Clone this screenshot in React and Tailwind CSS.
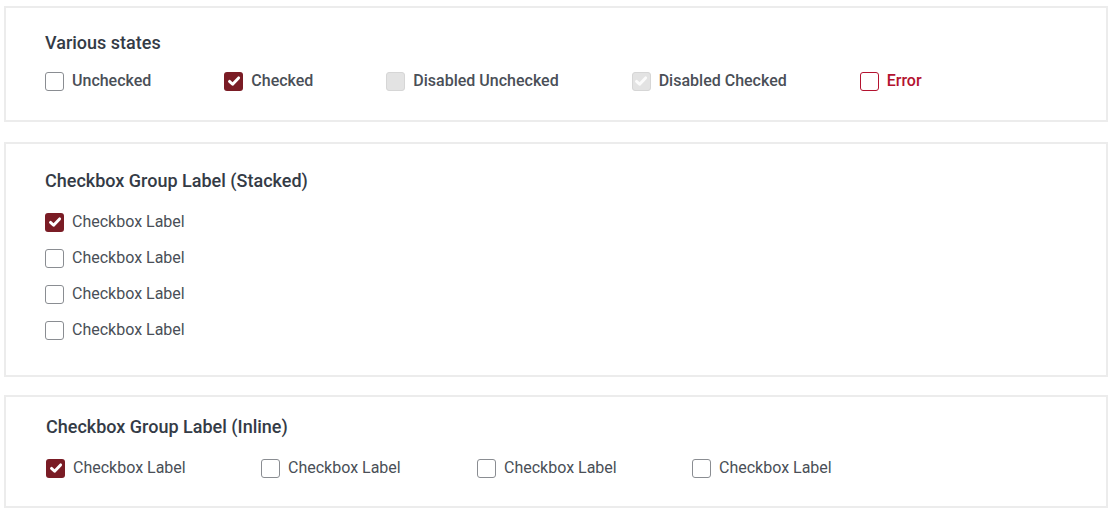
import React from "react";

function Check({ color = "#ffffff" }) {
  return (
    <svg width="14" height="14" viewBox="0 0 14 14" fill="none">
      <path d="M2.5 7.4 L5.6 10.3 L11.6 3.9" stroke={color} strokeWidth="2.9" strokeLinecap="round" strokeLinejoin="round" />
    </svg>
  );
}

function Box({ state }) {
  if (state === "checked")
    return (
      <span className="flex h-[19px] w-[19px] shrink-0 items-center justify-center rounded-[3px] bg-[#7a1c25]">
        <Check />
      </span>
    );
  if (state === "disabled")
    return <span className="h-[19px] w-[19px] shrink-0 rounded-[3px] border border-[#d6d6d6] bg-[#e3e3e3]" />;
  if (state === "disabledChecked")
    return (
      <span className="flex h-[19px] w-[19px] shrink-0 items-center justify-center rounded-[3px] border border-[#d6d6d6] bg-[#e3e3e3]">
        <Check color="#fbfbfb" />
      </span>
    );
  if (state === "error")
    return <span className="h-[19px] w-[19px] shrink-0 rounded-[3px] border border-[#b3122f] bg-white" />;
  return <span className="h-[19px] w-[19px] shrink-0 rounded-[3px] border border-[#8a8d92] bg-white" />;
}

function Item({ state, label, medium, error, className = "" }) {
  return (
    <label className={`flex h-6 items-center gap-[8px] ${className}`}>
      <Box state={state} />
      <span
        className={`text-[16px] leading-6 ${medium ? "font-medium" : "font-normal"} ${
          error ? "text-[#b3122f]" : "text-[#4a4f57]"
        }`}
      >
        {label}
      </span>
    </label>
  );
}

export default function App() {
  return (
    <div className="flex flex-col bg-white px-[4px] pt-[6px]" style={{ fontFamily: "Roboto, 'Liberation Sans', sans-serif" }}>
      <section className="border-2 border-[#ececec] pb-[27px] pl-[39px] pt-[23px]">
        <h2 className="text-[18px] font-medium leading-6 text-[#343b46]">Various states</h2>
        <div className="mt-[14px] flex items-center gap-[73px]">
          <Item state="unchecked" label="Unchecked" medium />
          <Item state="checked" label="Checked" medium />
          <Item state="disabled" label="Disabled Unchecked" medium />
          <Item state="disabledChecked" label="Disabled Checked" medium />
          <Item state="error" label="Error" medium error />
        </div>
      </section>

      <section className="mt-[20px] border-2 border-[#ececec] pb-[33px] pl-[39px] pt-[25px]">
        <h2 className="text-[18px] font-medium leading-6 text-[#343b46]">Checkbox Group Label (Stacked)</h2>
        <div className="mt-[17px] flex flex-col gap-[12px]">
          <Item state="checked" label="Checkbox Label" />
          <Item state="unchecked" label="Checkbox Label" />
          <Item state="unchecked" label="Checkbox Label" />
          <Item state="unchecked" label="Checkbox Label" />
        </div>
      </section>

      <section className="mt-[18px] border-2 border-[#ececec] pb-[26px] pl-[40px] pt-[18px]">
        <h2 className="text-[18px] font-medium leading-6 text-[#343b46]">Checkbox Group Label (Inline)</h2>
        <div className="mt-[17px] flex items-center">
          <Item state="checked" label="Checkbox Label" className="w-[215px]" />
          <Item state="unchecked" label="Checkbox Label" className="w-[216px]" />
          <Item state="unchecked" label="Checkbox Label" className="w-[215px]" />
          <Item state="unchecked" label="Checkbox Label" />
        </div>
      </section>
    </div>
  );
}
